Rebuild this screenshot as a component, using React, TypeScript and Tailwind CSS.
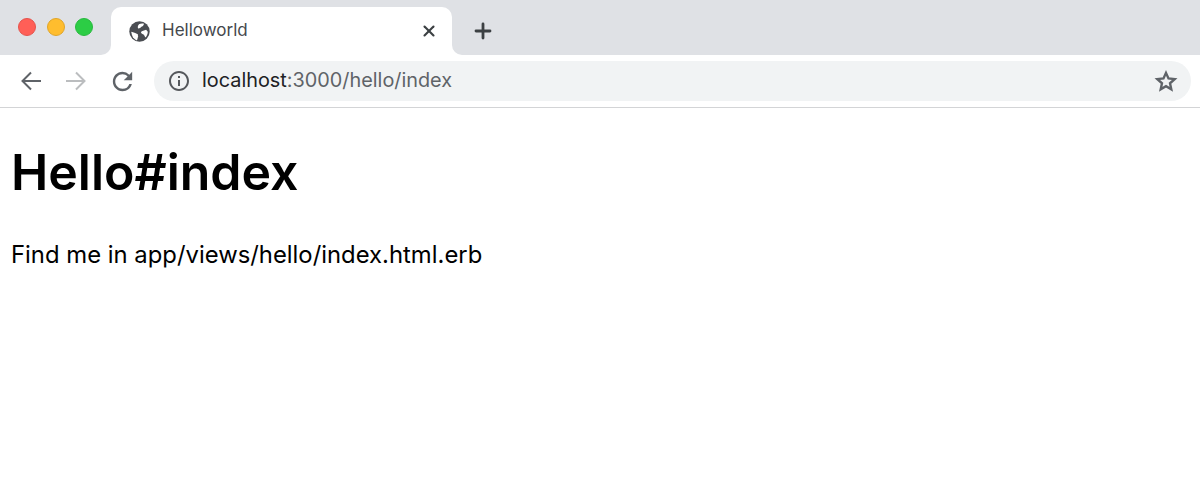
import { MdInfoOutline, MdRefresh } from "react-icons/md";
import { Plus, X } from "lucide-react";

function Globe() {
  return (
    <svg width="21" height="21" viewBox="0 0 21 21" className="shrink-0">
      <circle cx="10.5" cy="10.500" r="10.2" fill="#4a4d52" />
      <path d="M10 3.200c1.300-.7 3.300-.9 5-.5-.4 1.700-1.500 2.900-3 3.300-.5 1.200-1.700 1.500-2.700 1.400-.8-.9-.8-2.200.7-4.200z" fill="#fff" />
      <path d="M2.400 10.800l3.800 1.100 2.600 1.300.3 2.300-.8 2.900-.6 1c-3.200-1.300-5.100-4.600-5.300-8.100z" fill="#fff" />
      <path d="M12.800 10.200l4.300-1.500 1.700 2c-.1 2.500-1 4.400-2.400 5.800l-1.500-2.800-2.300-1.100-.7-1.400.9-1z" fill="#fff" />
    </svg>
  );
}

function Arrow({ flip, className }: { flip?: boolean; className: string }) {
  return (
    <svg width="20" height="20" viewBox="0 0 20 20" fill="none" stroke="currentColor" strokeWidth="2" className={className}>
      {flip ? <path d="M0 10h18.500M10 1.500l8.500 8.500-8.500 8.500" /> : <path d="M20 10H1.500M10 1.500L1.500 10l8.500 8.500" />}
    </svg>
  );
}

function Star() {
  return (
    <svg width="26" height="26" viewBox="0 0 24 24" fill="none" stroke="#5f6368" strokeWidth="2.200" strokeLinejoin="miter" className="shrink-0">
      <polygon points="12,4.500 14.300,9.700 20,10.300 15.700,14.100 16.900,19.700 12,16.800 7.100,19.700 8.300,14.100 4,10.300 9.700,9.700" />
    </svg>
  );
}

function Dot({ color, border }: { color: string; border: string }) {
  return <span className={`h-[18px] w-[18px] rounded-full border ${color} ${border}`} />;
}

export default function App() {
  return (
    <div className="flex h-[496px] w-[1200px] flex-col overflow-hidden bg-white font-['Inter',sans-serif]">
      <div className="flex h-[55px] shrink-0 bg-white">
        <div className="flex w-[111px] items-start gap-[10.5px] rounded-br-[10px] bg-[#dfe1e5] pl-[18px] pt-[18px]">
          <Dot color="bg-[#ff5f57]" border="border-[#e5534c]" />
          <Dot color="bg-[#ffbd2e]" border="border-[#e0a528]" />
          <Dot color="bg-[#2ccd45]" border="border-[#28b93e]" />
        </div>
        <div className="w-[341px] bg-[#dfe1e5] pt-[7px]">
          <div className="flex h-[48px] items-center rounded-t-[10px] bg-white pl-[18px] pr-[14px]">
            <Globe />
            <span className="ml-[12px] flex-1 text-[17px] text-[#45484d]">Helloworld</span>
            <X size={18} strokeWidth={2.8} className="text-[#3c4043]" />
          </div>
        </div>
        <div className="flex flex-1 items-start rounded-bl-[10px] bg-[#dfe1e5] pl-[19px] pt-[19px]">
          <Plus size={24} strokeWidth={2.8} className="text-[#3c4043]" />
        </div>
      </div>
      <div className="flex h-[53px] shrink-0 items-start border-b border-[#d3d4d6] bg-white">
        <div className="flex h-[52px] w-[154px] items-center pl-[21px]">
          <Arrow className="text-[#5f6368]" />
          <Arrow flip className="ml-[25px] text-[#bbbdbf]" />
          <MdRefresh size={29} className="ml-[22px] text-[#5f6368]" />
        </div>
        <div className="mt-[6px] flex h-[40px] w-[1037px] items-center rounded-full bg-[#f1f3f4] pl-[13px] pr-[12px]">
          <MdInfoOutline size={24} className="text-[#55585c]" />
          <span className="ml-[11px] flex-1 text-[19.85px] text-[#202124]">
            localhost<span className="text-[#5f6368]">:3000/hello/index</span>
          </span>
          <Star />
        </div>
      </div>
      <div className="px-[11px]">
        <h1 className="mt-[35px] text-[50px] font-semibold leading-[58px] text-black">Hello#index</h1>
        <p className="mt-[40px] text-[23.85px] leading-[28px] text-black">Find me in app/views/hello/index.html.erb</p>
      </div>
    </div>
  );
}
